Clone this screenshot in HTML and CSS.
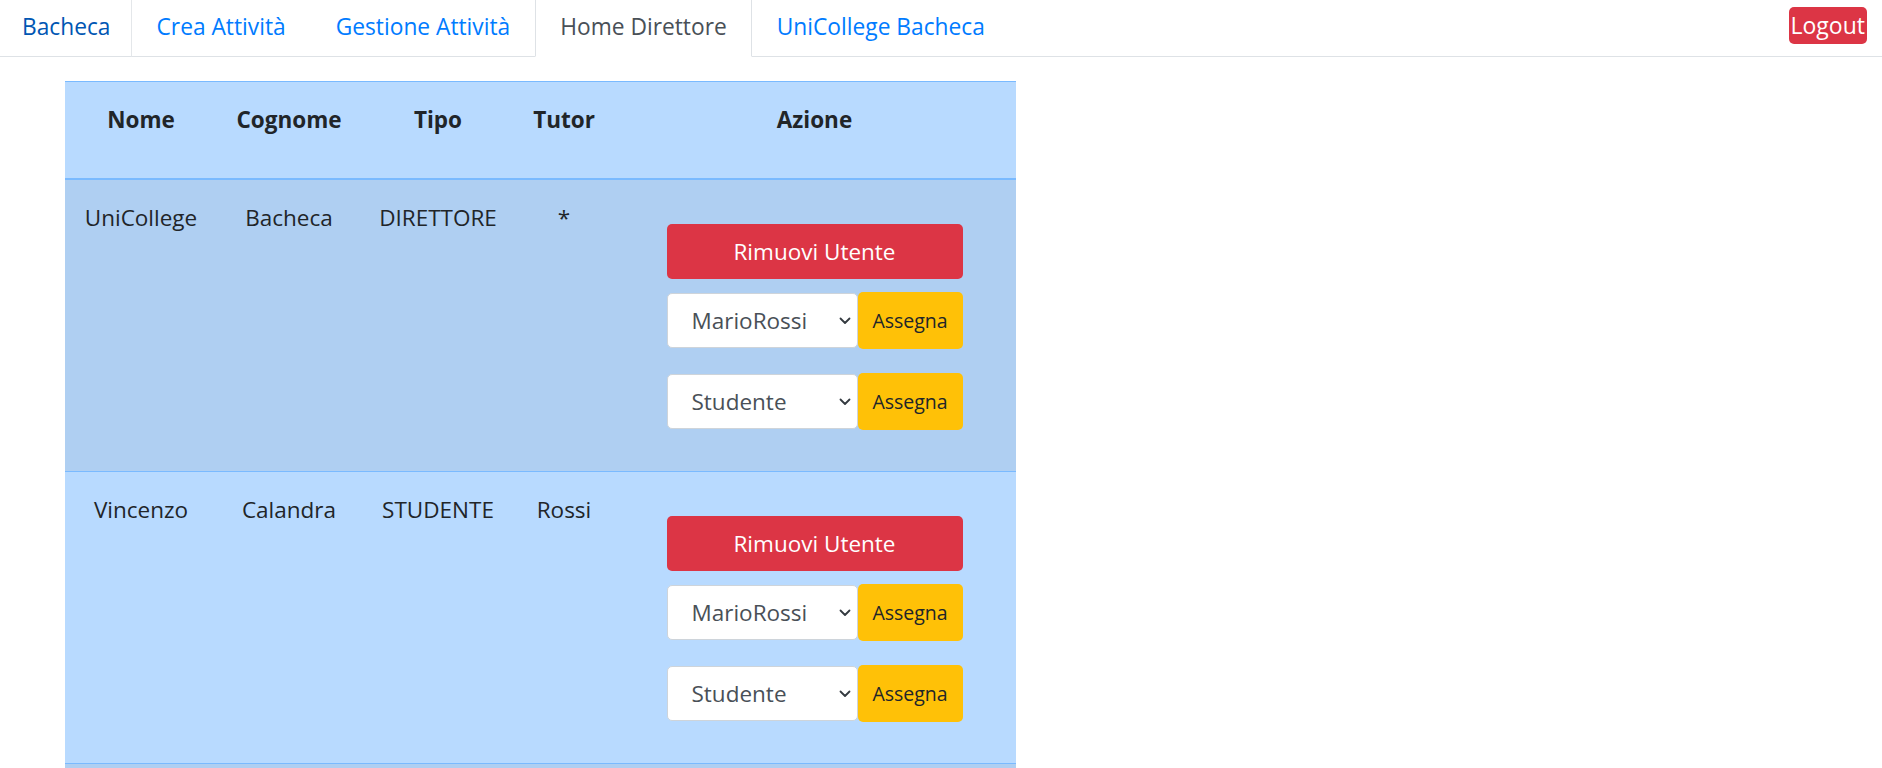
FILE: index.html
```html
<!DOCTYPE html>
<html lang="it">
<head>
<meta charset="utf-8">
<title>Home Direttore</title>
<link rel="stylesheet" href="styles.css">
</head>
<body>
<nav class="tabs">
  <a class="tab tab-hover" href="#">Bacheca</a>
  <a class="tab" href="#">Crea Attività</a>
  <a class="tab" href="#">Gestione Attività</a>
  <a class="tab tab-active" href="#">Home Direttore</a>
  <a class="tab" href="#">UniCollege Bacheca</a>
  <button class="logout" type="button">Logout</button>
</nav>

<table class="users">
  <colgroup>
    <col class="c-nome"><col class="c-cognome"><col class="c-tipo"><col class="c-tutor"><col class="c-azione">
  </colgroup>
  <thead>
    <tr><th>Nome</th><th>Cognome</th><th>Tipo</th><th>Tutor</th><th>Azione</th></tr>
  </thead>
  <tbody>
    <tr class="odd">
      <td>UniCollege</td><td>Bacheca</td><td>DIRETTORE</td><td>*</td>
      <td class="azione">
        <div class="actions">
          <button class="btn-danger" type="button">Rimuovi Utente</button>
          <div class="group">
            <div class="sel-wrap">
              <select class="sel"><option>MarioRossi</option></select>
              <svg class="chev" width="12" height="8" viewBox="0 0 12 8"><path d="M1.5 1.5 6 6l4.5-4.5" fill="none" stroke="#343a40" stroke-width="1.8" stroke-linecap="round" stroke-linejoin="round"/></svg>
            </div>
            <button class="btn-warn" type="button">Assegna</button>
          </div>
          <div class="group group-2">
            <div class="sel-wrap">
              <select class="sel"><option>Studente</option></select>
              <svg class="chev" width="12" height="8" viewBox="0 0 12 8"><path d="M1.5 1.5 6 6l4.5-4.5" fill="none" stroke="#343a40" stroke-width="1.8" stroke-linecap="round" stroke-linejoin="round"/></svg>
            </div>
            <button class="btn-warn" type="button">Assegna</button>
          </div>
        </div>
      </td>
    </tr>
    <tr>
      <td>Vincenzo</td><td>Calandra</td><td>STUDENTE</td><td>Rossi</td>
      <td class="azione">
        <div class="actions">
          <button class="btn-danger" type="button">Rimuovi Utente</button>
          <div class="group">
            <div class="sel-wrap">
              <select class="sel"><option>MarioRossi</option></select>
              <svg class="chev" width="12" height="8" viewBox="0 0 12 8"><path d="M1.5 1.5 6 6l4.5-4.5" fill="none" stroke="#343a40" stroke-width="1.8" stroke-linecap="round" stroke-linejoin="round"/></svg>
            </div>
            <button class="btn-warn" type="button">Assegna</button>
          </div>
          <div class="group group-2">
            <div class="sel-wrap">
              <select class="sel"><option>Studente</option></select>
              <svg class="chev" width="12" height="8" viewBox="0 0 12 8"><path d="M1.5 1.5 6 6l4.5-4.5" fill="none" stroke="#343a40" stroke-width="1.8" stroke-linecap="round" stroke-linejoin="round"/></svg>
            </div>
            <button class="btn-warn" type="button">Assegna</button>
          </div>
        </div>
      </td>
    </tr>
    <tr class="odd spacer-row">
      <td></td><td></td><td></td><td></td><td></td>
    </tr>
  </tbody>
</table>
</body>
</html>
```
FILE: styles.css
```css
html, body {
  margin: 0;
  padding: 0;
  background: #fff;
}
body {
  font-family: "Open Sans", "Noto Sans", Arial, sans-serif;
  font-size: 22.5px;
  line-height: 34px;
  color: #212529;
}

/* ---------- tabs ---------- */
.tabs {
  display: flex;
  align-items: flex-start;
  height: 56px;
  border-bottom: 1px solid #dee2e6;
}
.tab {
  display: block;
  box-sizing: border-box;
  height: 57px;
  margin-bottom: -1px;
  padding: 10px 24px 11px;
  border: 1px solid transparent;
  border-top: 0;
  color: #007bff;
  font-size: 22.75px;
  text-decoration: none;
  white-space: nowrap;
}
.tab-hover {
  color: #0056b3;
  border-left-color: transparent;
  border-right-color: #e4e7ea;
  padding-left: 21px;
  padding-right: 20px;
}
.tab-active {
  color: #495057;
  background: #fff;
  border-left-color: #dee2e6;
  border-right-color: #dee2e6;
  border-bottom-color: #fff;
}
.logout {
  margin: 7px 15px 0 auto;
  height: 37px;
  padding: 0 2px;
  border: 0;
  border-radius: 5px;
  background: #dc3545;
  color: #fff;
  font-family: inherit;
  font-size: 23px;
  line-height: 37px;
}

/* ---------- table ---------- */
.users {
  margin: 24px 0 0 65px;
  width: 951px;
  border-collapse: separate;
  border-spacing: 0;
  table-layout: fixed;
  background: #b8daff;
}
.c-nome { width: 152px; }
.c-cognome { width: 144px; }
.c-tipo { width: 154px; }
.c-tutor { width: 98px; }
.c-azione { width: 403px; }

.users th {
  font-weight: 700;
  text-align: center;
  vertical-align: top;
  padding: 21px 0 41px;
  border-top: 1px solid #7abaff;
  border-bottom: 2px solid #7abaff;
}
.users td {
  text-align: center;
  vertical-align: top;
  padding: 21px 0 0;
  border-top: 1px solid #7abaff;
}
.users tbody tr:first-child td {
  border-top: 0;
}
.users tr.odd td {
  background: #afcff2;
}
.users td.azione {
  padding: 44px 0 42px;
}
.users tr.spacer-row td {
  height: 40px;
  padding: 0;
}

.actions {
  width: 296px;
  margin: 0 auto;
  display: flex;
  flex-direction: column;
}
.btn-danger {
  height: 55px;
  border: 0;
  border-radius: 5px;
  background: #dc3545;
  color: #fff;
  font-family: inherit;
  font-size: 22.5px;
  line-height: 34px;
  padding: 0;
}
.group {
  display: flex;
  height: 55px;
  margin-top: 14px;
}
.group-2 {
  margin-top: 26px;
}
.sel-wrap {
  position: relative;
  flex: 0 0 191px;
}
.sel {
  -webkit-appearance: none;
  appearance: none;
  box-sizing: border-box;
  width: 100%;
  height: 55px;
  margin: 0;
  padding: 0 30px 0 24px;
  border: 1px solid #ced4da;
  border-radius: 5px;
  background: #fff;
  color: #495057;
  font-family: inherit;
  font-size: 22.5px;
  line-height: 34px;
}
.chev {
  position: absolute;
  right: 7px;
  top: 24px;
  pointer-events: none;
}
.btn-warn {
  flex: 1 1 auto;
  height: 57px;
  margin: -1px 0 0;
  padding: 0;
  border: 0;
  border-radius: 5px;
  background: #ffc107;
  color: #212529;
  font-family: inherit;
  font-size: 19.5px;
  line-height: 30px;
}
```
